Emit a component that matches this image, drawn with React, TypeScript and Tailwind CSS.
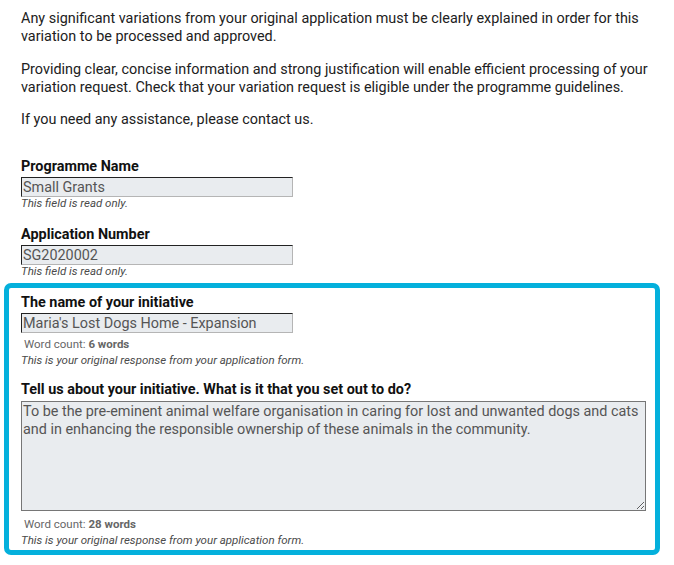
import React from "react";

function ReadOnlyField({ label, value }: { label: string; value: string }) {
  return (
    <div>
      <label className="block pt-[2px] text-[14.4px] leading-[18px] font-bold text-[#111]">{label}</label>
      <input
        readOnly
        value={value}
        className="mt-[1px] block h-[20px] w-[272px] border border-t-[#222] border-l-[#222] border-b-[#b5b5b5] border-r-[#b5b5b5] bg-[#e9ecef] px-[1px] text-[14.4px] leading-[18px] text-[#555] outline-none"
      />
    </div>
  );
}

export default function App() {
  return (
    <div className="min-h-[565px] bg-white pt-[10px] font-['Roboto','Liberation_Sans',sans-serif] text-[#212121]">
      <div className="px-[21px]">
        <p className="text-[14.4px] leading-[18px]">
          Any significant variations from your original application must be clearly explained in order for this
          variation to be processed and approved.
        </p>
        <p className="mt-[15px] text-[14.4px] leading-[18px]">
          Providing clear, concise information and strong justification will enable efficient processing of your
          variation request. Check that your variation request is eligible under the programme guidelines.
        </p>
        <p className="mt-[14px] text-[14.4px] leading-[18px]">If you need any assistance, please contact us.</p>

        <div className="mt-[27px]">
          <ReadOnlyField label="Programme Name" value="Small Grants" />
          <p className="text-[11.5px] leading-[13px] italic text-[#4a4a4a]">This field is read only.</p>
        </div>

        <div className="mt-[14px]">
          <ReadOnlyField label="Application Number" value="SG2020002" />
          <p className="text-[11.5px] leading-[13px] italic text-[#4a4a4a]">This field is read only.</p>
        </div>
      </div>

      <div className="mx-[4px] mt-[5px] w-[656px] rounded-[7px] border-[5px] border-[#04b0dc] px-[12px] pt-[4px] pb-[2px]">
        <ReadOnlyField label="The name of your initiative" value="Maria's Lost Dogs Home - Expansion" />
        <p className="mt-[3px] pl-[3px] text-[11.5px] leading-[16px] text-[#666]">
          Word count: <span className="font-bold">6 words</span>
        </p>
        <p className="text-[11.5px] leading-[16px] italic text-[#4a4a4a]">
          This is your original response from your application form.
        </p>

        <label className="mt-[11px] block pt-[2px] text-[14.4px] leading-[18px] font-bold text-[#111]">
          Tell us about your initiative. What is it that you set out to do?
        </label>
        <textarea
          readOnly
          defaultValue="To be the pre-eminent animal welfare organisation in caring for lost and unwanted dogs and cats and in enhancing the responsible ownership of these animals in the community."
          className="mt-[2px] block h-[110px] w-[625px] border border-[#767676] bg-[#e9ecef] px-[1px] py-[1px] text-[14.4px] leading-[18px] text-[#555] outline-none"
        />
        <p className="mt-[5px] pl-[3px] text-[11.5px] leading-[16px] text-[#666]">
          Word count: <span className="font-bold">28 words</span>
        </p>
        <p className="text-[11.5px] leading-[16px] italic text-[#4a4a4a]">
          This is your original response from your application form.
        </p>
      </div>
    </div>
  );
}
